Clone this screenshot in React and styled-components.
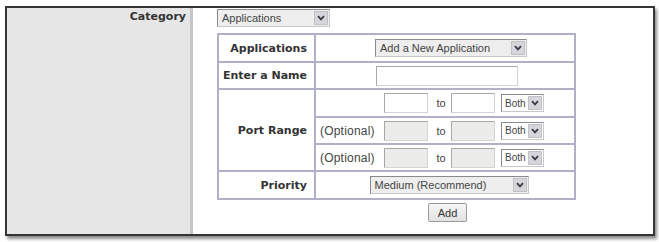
import React from "react";
import styled, { createGlobalStyle } from "styled-components";

const Global = createGlobalStyle`
  html, body { margin: 0; padding: 0; background: #ffffff; }
  body { font-family: "Liberation Sans", Arial, sans-serif; font-size: 11px; color: #222; }
`;

const Page = styled.div`
  width: 659px;
  height: 242px;
  box-sizing: border-box;
  padding: 6px 4px 0 5px;
`;

const Frame = styled.div`
  display: flex;
  height: 230px;
  box-sizing: border-box;
  border: 2px solid #343434;
  box-shadow: 2px 3px 3px rgba(0, 0, 0, 0.45);
  background: #fff;
`;

const Side = styled.div`
  width: 179px;
  background: #e6e6e6;
  border-right: 3px solid #c6c6c6;
  padding: 2px 4px 0 0;
  text-align: right;
`;

const SideLabel = styled.div`
  font-family: "DejaVu Sans", Verdana, sans-serif;
  font-weight: bold;
  font-size: 11px;
  color: #333;
`;

const Main = styled.div`
  flex: 1;
  padding: 1px 0 0 24px;
  display: flex;
  flex-direction: column;
  align-items: flex-start;
`;

const SelectBox = styled.div`
  display: flex;
  align-items: center;
  justify-content: space-between;
  box-sizing: border-box;
  width: ${(p) => p.$w}px;
  height: 18px;
  padding: 0 1px 0 ${(p) => p.$pad || 4}px;
  background: ${(p) => (p.$gray ? "#eeeeee" : "#ffffff")};
  border: 1px solid #c8c8c8;
  border-top-color: #8a8a8a;
  border-left-color: #8a8a8a;
  font-family: "Liberation Sans", Arial, sans-serif;
  font-size: ${(p) => p.$fs || 11}px;
  color: #444;
  white-space: nowrap;
`;

const Arrow = styled.span`
  display: flex;
  align-items: center;
  justify-content: center;
  flex: none;
  width: 14px;
  height: 14px;
  background: #d6d6da;
  border: 1px solid #c2c2c6;
  box-sizing: border-box;
`;

const Chevron = () => (
  <svg width="8" height="6" viewBox="0 0 8 6">
    <path d="M1 1.2 L4 4.4 L7 1.2" fill="none" stroke="#3a3a48" strokeWidth="1.8" />
  </svg>
);

const Select = ({ w, gray, pad, fs, children }) => (
  <SelectBox $w={w} $gray={gray} $pad={pad} $fs={fs}>
    <span>{children}</span>
    <Arrow>
      <Chevron />
    </Arrow>
  </SelectBox>
);

const Table = styled.table`
  margin-top: 6px;
  border-collapse: collapse;
  border: 2px solid #b0b1c6;
`;

const Head = styled.td`
  width: 88px;
  padding: 0 7px 0 0;
  border: 2px solid #b0b1c6;
  text-align: right;
  font-family: "DejaVu Sans", Verdana, sans-serif;
  font-weight: bold;
  font-size: 11px;
  color: #333;
  white-space: nowrap;
`;

const Cell = styled.td`
  width: 258px;
  height: ${(p) => p.$h || 26}px;
  padding: 0;
  border: 2px solid #b0b1c6;
  border-top-color: ${(p) => (p.$soft ? "#cfd0dc" : "#b0b1c6")};
`;

const Center = styled.div`
  display: flex;
  justify-content: center;
  padding-left: ${(p) => p.$shift || 0}px;
`;

const PortLine = styled.div`
  display: flex;
  align-items: center;
  padding-left: 4px;
`;

const Optional = styled.span`
  width: 64px;
  font-size: 12px;
  letter-spacing: 0.2px;
  color: #444;
  white-space: nowrap;
`;

const Input = styled.div`
  box-sizing: border-box;
  width: ${(p) => p.$w}px;
  height: 20px;
  background: ${(p) => (p.$off ? "#ececea" : "#ffffff")};
  border: 1px solid #d4d4d4;
  border-top-color: #a8a8a8;
  border-left-color: #a8a8a8;
`;

const To = styled.span`
  width: 23px;
  padding-left: 3px;
  box-sizing: border-box;
  text-align: center;
  color: #444;
`;

const Gap = styled.span`
  width: ${(p) => p.$w}px;
`;

const ButtonRow = styled.div`
  display: flex;
  padding: 3px 0 0 211px;
`;

const Button = styled.button`
  width: 39px;
  height: 19px;
  padding: 0;
  font-family: "Liberation Sans", Arial, sans-serif;
  font-size: 11px;
  color: #333;
  background: linear-gradient(#f7f7f7, #e2e2e2);
  border: 1px solid #9a9a9a;
  border-radius: 2px;
`;

const PortRow = ({ optional }) => (
  <PortLine>
    <Optional>{optional ? "(Optional)" : ""}</Optional>
    <Input $w={44} $off={optional} />
    <To>to</To>
    <Input $w={44} $off={optional} />
    <Gap $w={6} />
    <Select w={43} pad={3} fs={10}>
      Both
    </Select>
  </PortLine>
);

export default function App() {
  return (
    <>
      <Global />
      <Page>
        <Frame>
          <Side>
            <SideLabel>Category</SideLabel>
          </Side>
          <Main>
            <Select w={113} gray>
              Applications
            </Select>
            <Table>
              <tbody>
                <tr>
                  <Head>Applications</Head>
                  <Cell $h={26}>
                    <Center $shift={12}>
                      <Select w={152} gray>
                        Add a New Application
                      </Select>
                    </Center>
                  </Cell>
                </tr>
                <tr>
                  <Head>Enter a Name</Head>
                  <Cell $h={25} $soft>
                    <Center $shift={4}>
                      <Input $w={142} />
                    </Center>
                  </Cell>
                </tr>
                <tr>
                  <Head rowSpan={3}>Port Range</Head>
                  <Cell $h={26} $soft>
                    <PortRow />
                  </Cell>
                </tr>
                <tr>
                  <Cell $h={25} $soft>
                    <PortRow optional />
                  </Cell>
                </tr>
                <tr>
                  <Cell $h={25} $soft>
                    <PortRow optional />
                  </Cell>
                </tr>
                <tr>
                  <Head>Priority</Head>
                  <Cell $h={26}>
                    <Center $shift={8}>
                      <Select w={159} gray>
                        Medium (Recommend)
                      </Select>
                    </Center>
                  </Cell>
                </tr>
              </tbody>
            </Table>
            <ButtonRow>
              <Button>Add</Button>
            </ButtonRow>
          </Main>
        </Frame>
      </Page>
    </>
  );
}
